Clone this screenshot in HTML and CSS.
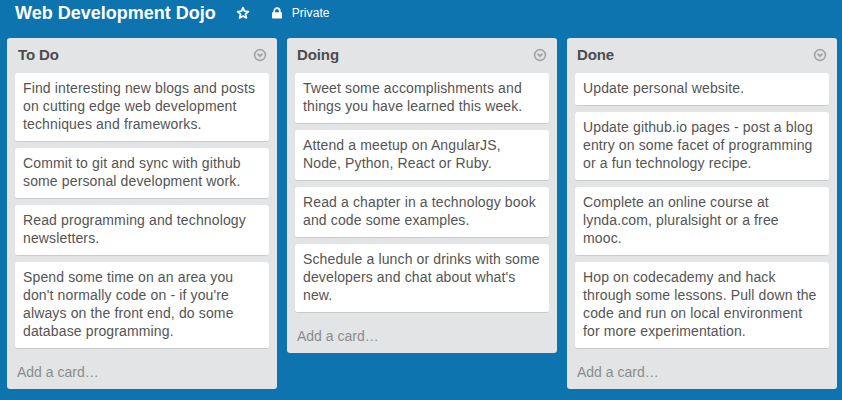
FILE: index.html
```html
<!DOCTYPE html>
<html lang="en">
<head>
<meta charset="utf-8">
<title>Web Development Dojo</title>
<link rel="stylesheet" href="styles.css">
</head>
<body>
<svg class="defs" width="0" height="0" aria-hidden="true">
  <symbol id="chevron" viewBox="0 0 14 14"><circle cx="7" cy="7" r="5.4" fill="none" stroke="currentColor" stroke-width="1.7"/><path d="M4.4 5.7 7 8.1 9.6 5.7" fill="none" stroke="currentColor" stroke-width="1.9"/></symbol>
</svg>
<header class="header">
  <h1 class="title">Web Development Dojo</h1>
  <svg class="star" viewBox="0 0 14 14"><path d="M7 1.7 8.5 5.2 12.4 5.5 9.5 8.1 10.4 12 7 10 3.6 12 4.5 8.1 1.6 5.5 5.5 5.2Z" fill="none" stroke="currentColor" stroke-width="1.7" stroke-linejoin="round"/></svg>
  <svg class="lock" viewBox="0 0 12 12"><path d="M3.2 6V4a2.8 2.8 0 0 1 5.6 0v2" fill="none" stroke="currentColor" stroke-width="1.7"/><rect x="1" y="5.2" width="10" height="6.3" rx=".7" fill="currentColor"/></svg>
  <span class="visibility">Private</span>
</header>
<main class="board">
  <section class="list">
    <div class="list-head"><h2 class="list-title todo">To Do</h2><svg class="menu"><use href="#chevron"/></svg></div>
    <div class="cards">
      <p class="card">Find interesting new blogs and posts<br>on cutting edge web development<br>techniques and frameworks.</p>
      <p class="card">Commit to git and sync with github<br>some personal development work.</p>
      <p class="card">Read programming and technology<br>newsletters.</p>
      <p class="card">Spend some time on an area you<br>don't normally code on - if you're<br>always on the front end, do some<br>database programming.</p>
    </div>
    <div class="add">Add a card…</div>
  </section>
  <section class="list">
    <div class="list-head"><h2 class="list-title">Doing</h2><svg class="menu"><use href="#chevron"/></svg></div>
    <div class="cards">
      <p class="card">Tweet some accomplishments and<br>things you have learned this week.</p>
      <p class="card">Attend a meetup on AngularJS,<br>Node, Python, React or Ruby.</p>
      <p class="card">Read a chapter in a technology book<br>and code some examples.</p>
      <p class="card">Schedule a lunch or drinks with some<br>developers and chat about what's<br>new.</p>
    </div>
    <div class="add">Add a card…</div>
  </section>
  <section class="list">
    <div class="list-head"><h2 class="list-title">Done</h2><svg class="menu"><use href="#chevron"/></svg></div>
    <div class="cards">
      <p class="card">Update personal website.</p>
      <p class="card">Update github.io pages - post a blog<br>entry on some facet of programming<br>or a fun technology recipe.</p>
      <p class="card">Complete an online course at<br>lynda.com, pluralsight or a free<br>mooc.</p>
      <p class="card">Hop on codecademy and hack<br>through some lessons. Pull down the<br>code and run on local environment<br>for more experimentation.</p>
    </div>
    <div class="add">Add a card…</div>
  </section>
</main>
</body>
</html>
```
FILE: styles.css
```css
* { box-sizing: border-box; }
body {
  margin: 0;
  height: 400px;
  overflow: hidden;
  background: #0e74af;
  color: #4d4d4d;
  font-family: "Liberation Sans", Arial, sans-serif;
}
.defs { display: block; }
.header {
  display: flex;
  align-items: center;
  height: 26px;
  padding-left: 15px;
  color: #fff;
}
.title { margin: 0; font-size: 18px; line-height: 26px; white-space: nowrap; }
.star { width: 14px; height: 14px; margin-left: 20px; }
.lock { width: 12px; height: 12px; margin-left: 21px; }
.visibility { margin-left: 9px; font-size: 12px; letter-spacing: .08px; }
.board {
  display: flex;
  align-items: flex-start;
  gap: 10px;
  padding: 12px 0 0 7px;
}
.list {
  flex: 0 0 270px;
  padding: 0 8px;
  border-radius: 3px;
  background: #e2e4e6;
}
.list-head {
  display: flex;
  align-items: center;
  justify-content: space-between;
  height: 35px;
  padding: 0 2px 2px;
}
.list-title { margin: 0; font-size: 15px; line-height: 18px; letter-spacing: -.1px; }
.todo { padding-left: 1px; }
.menu { width: 14px; height: 14px; color: #a6a6a6; }
.cards { display: flex; flex-direction: column; gap: 6px; }
.card {
  margin: 0;
  padding: 6px 8px 8px;
  border-bottom: 1px solid #c8cacc;
  border-radius: 3px;
  background: #fff;
  color: #545454;
  font-size: 14px;
  line-height: 18px;
  letter-spacing: .135px;
  white-space: nowrap;
}
.add {
  height: 40px;
  padding: 14px 2px 0;
  color: #8c8c8c;
  font-size: 14px;
  line-height: 18px;
}
```
